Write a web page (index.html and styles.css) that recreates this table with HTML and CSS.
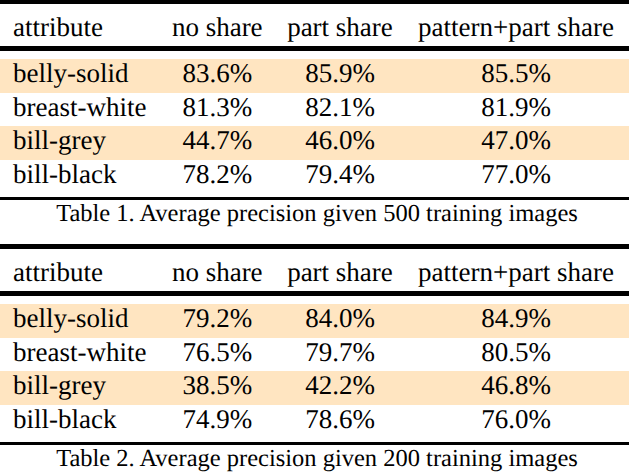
FILE: index.html
```html
<!DOCTYPE html>
<html lang="en">
<head>
<meta charset="utf-8">
<title>Average precision tables</title>
<link rel="stylesheet" href="styles.css">
</head>
<body>
<div class="page">
  <figure class="result first">
    <table class="ap">
      <colgroup>
        <col class="c-attr"><col class="c-no"><col class="c-part"><col class="c-pattern">
      </colgroup>
      <thead>
        <tr><th class="attr">attribute</th><th>no share</th><th>part share</th><th class="last">pattern+part share</th></tr>
      </thead>
      <tbody>
        <tr class="hl"><td class="attr">belly-solid</td><td>83.6%</td><td>85.9%</td><td class="last">85.5%</td></tr>
        <tr><td class="attr">breast-white</td><td>81.3%</td><td>82.1%</td><td class="last">81.9%</td></tr>
        <tr class="hl"><td class="attr">bill-grey</td><td>44.7%</td><td>46.0%</td><td class="last">47.0%</td></tr>
        <tr><td class="attr">bill-black</td><td>78.2%</td><td>79.4%</td><td class="last">77.0%</td></tr>
      </tbody>
    </table>
    <figcaption class="caption">Table 1. Average precision given 500 training images</figcaption>
  </figure>
  <figure class="result">
    <table class="ap">
      <colgroup>
        <col class="c-attr"><col class="c-no"><col class="c-part"><col class="c-pattern">
      </colgroup>
      <thead>
        <tr><th class="attr">attribute</th><th>no share</th><th>part share</th><th class="last">pattern+part share</th></tr>
      </thead>
      <tbody>
        <tr class="hl"><td class="attr">belly-solid</td><td>79.2%</td><td>84.0%</td><td class="last">84.9%</td></tr>
        <tr><td class="attr">breast-white</td><td>76.5%</td><td>79.7%</td><td class="last">80.5%</td></tr>
        <tr class="hl"><td class="attr">bill-grey</td><td>38.5%</td><td>42.2%</td><td class="last">46.8%</td></tr>
        <tr><td class="attr">bill-black</td><td>74.9%</td><td>78.6%</td><td class="last">76.0%</td></tr>
      </tbody>
    </table>
    <figcaption class="caption">Table 2. Average precision given 200 training images</figcaption>
  </figure>
</div>
</body>
</html>
```

FILE: styles.css
```css
html, body {
  margin: 0;
  padding: 0;
  background: #ffffff;
}

body {
  width: 630px;
  height: 474px;
  overflow: hidden;
  font-family: "Liberation Serif", "Times New Roman", serif;
  color: #000000;
  text-rendering: geometricPrecision;
}

.page {
  display: flex;
  flex-direction: column;
  gap: 17px;
  margin-top: -1px;
}

.result {
  margin: 0;
  display: flex;
  flex-direction: column;
}

.ap {
  width: 629px;
  table-layout: fixed;
  border-collapse: separate;
  border-spacing: 0;
  border-top: 5px solid #000;
  border-bottom: 3px solid #000;
  font-family: "Liberation Serif", "Times New Roman", serif;
  font-size: 27px;
  line-height: 28px;
}

.c-attr { width: 159.5px; }
.c-no { width: 115.5px; }
.c-part { width: 130px; }
.c-pattern { width: 224px; }

.ap th,
.ap td {
  font-family: "Liberation Serif", "Times New Roman", serif;
  font-size: 27px;
  padding: 0 12px 5.5px;
  text-align: center;
  white-space: nowrap;
  font-weight: normal;
  text-rendering: geometricPrecision;
}

.ap th {
  padding-top: 8.5px;
  border-bottom: 5px solid #000;
}

.ap .attr {
  text-align: left;
  padding-left: 13px;
}

.ap .last {
  padding-right: 14px;
}

.ap tbody tr:first-child td {
  border-top: 8px solid #fff;
}

.ap tbody tr:last-child td {
  border-bottom: 4px solid #fff;
}

.ap tr.hl td {
  background: #ffe5c1;
}

.caption {
  font-family: "Liberation Serif", "Times New Roman", serif;
  font-size: 24.5px;
  line-height: 27px;
  text-align: center;
  padding-left: 4px;
}
```
